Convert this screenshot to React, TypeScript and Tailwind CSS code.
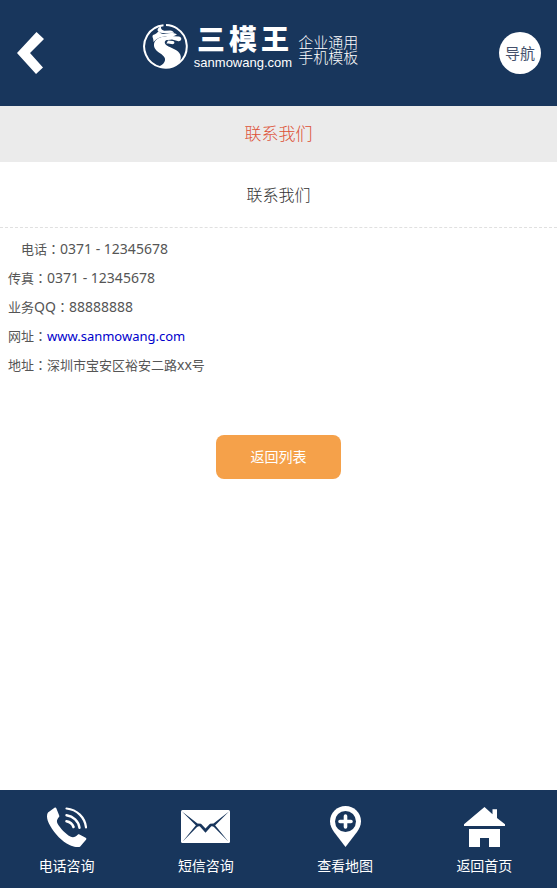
import type { ReactNode } from "react";

const PhoneIcon = () => (
    <svg className="w-10 h-10" viewBox="0 0 40 40" fill="currentColor">
        <path d="M7.500.8 1 5.500C-.8 8-.2 13 3 18.500 8 27 15 34.500 22.500 38c4 2 7.500 2.500 10.500 1.700l6-7c.6-.8.5-1.500-.3-2l-6.200-3.100c-.7-.4-1.300-.3-1.800.2-2 2-4.500 3.200-7.400 1.700C18.500 27 13.500 21.500 10.500 16.500c-1.300-2.500-.3-4.300 1.500-6.500.4-.6.4-1 .1-1.700L9.300 1.200C8.900.3 8.300.2 7.500.8z" />
        <g fill="none" stroke="currentColor" strokeLinecap="round">
            <path strokeWidth="2.200" d="M19.500 1.500C30 2.500 38 10.500 39 20.500" />
            <path strokeWidth="2.400" d="M19.500 8.200c6.800 1 12 6 13 12.500" />
            <path strokeWidth="2.600" d="M19.500 14.200c3.600.7 6 2.700 7 5.800" />
        </g>
    </svg>
);

const MailIcon = () => (
    <svg className="w-[49px] h-[33px]" viewBox="0 0 49 33">
        <rect width="49" height="33" rx="1.500" fill="currentColor" />
        <g fill="#18365c">
            <path d="M1 1.500 16.500 13.500l3.500.3 4.500 4.600 4.500-4.600 3.500-.3L48 1.500 33 16.500l-2.700-.2-5.800 6.400-5.800-6.400-2.700.2z" />
            <path d="M1.500 31.800 15.500 14.500h3zM47.500 31.800 33.500 14.500h-3z" />
        </g>
    </svg>
);

const PinIcon = () => (
    <svg className="w-[31px] h-[41px]" viewBox="0 0 31 41">
        <path fill="currentColor" d="M15.500 0C7 0 0 6.800 0 15.200c0 4.300 1.800 7.400 4 10.800L15.500 41 27 26c2.200-3.400 4-6.500 4-10.800C31 6.800 24 0 15.500 0z" />
        <circle cx="15.500" cy="15.500" r="10.500" fill="#18365c" />
        <path stroke="currentColor" strokeWidth="3.600" strokeLinecap="round" d="M15.500 10v11M10 15.500h11" />
    </svg>
);

const HomeIcon = () => (
    <svg className="w-[41px] h-10" viewBox="0 0 41 40" fill="currentColor">
        <path d="M20.500 0 0 17.200V19h41v-1.700L33 11V2.200h-4.500v5z" />
        <path d="M5 22h31v18H25v-9h-9v9H5z" />
    </svg>
);

const DragonLogo = () => (
    <svg className="w-[45px] h-[46px]" viewBox="3 4 45 46">
        <path
            fill="none"
            stroke="currentColor"
            strokeWidth="2"
            d="M23.500 5.200A21.300 21.300 0 1 0 37 8.500M26 5.100c4 .1 8 1.300 11.500 3.700"
        />
        <g fill="currentColor">
            {/* body */}
            <path d="M26 16.500c-6 0-11.500 3-12 7.500-.4 4 2 6.500 6 9.200 4.500 3 6 5.300 4.500 8.500-1.200 2.500-3.500 4-6 4.800 6 2.300 13 2 18-1.500 5.500-4 5.500-10 1.500-13.500-4-3.500-12-5-13-8-.8-2.500 1-4 4.500-4.300l4.500-.5z" />
            {/* head and jaw */}
            <path d="M27 15l7 1.200 5 .2c1.800.3 2.800 1.800 2.200 3.200-.6 1.500-2 2-3.500 1.500L32 19.500l-7 .8z" />
            <path d="M28 20.500l5 .6c1.700.5 2 2.400.4 3-1.400.5-4-.6-7-.6z" />
            {/* mane and horns */}
            <path d="M13 15c3-1 4.500-2.500 6-4 1 2.500 3.500 3.500 6.500 2.700 4.500-1 8.500-1 11.500.8l-3.500 1.700-8.500.3c-5 .2-8.500 2-11.500 5.500.3-4-2-5-.5-7z" />
            <path d="M17.500 10.500c0-2 1.500-3.300 3.700-4.500-.8 2.500.3 4 3 4.700l6-.2c2 .2 3 1 4 2.200l-6.500.3c-4 .5-8 .3-10.200-2.500z" />
        </g>
    </svg>
);

const links = [
    { label: "电话咨询", icon: <PhoneIcon /> },
    { label: "短信咨询", icon: <MailIcon /> },
    { label: "查看地图", icon: <PinIcon /> },
    { label: "返回首页", icon: <HomeIcon /> },
];

function Row({ label, children }: { label: ReactNode; children: ReactNode }) {
    return (
        <p className="h-[29px] leading-[29px]">
            {label}
            {/* Traditional form centres the colon in its cell */}
            <span lang="zh-TW" className="font-['Noto_Sans_CJK_TC',sans-serif]">：</span>
            {children}
        </p>
    );
}

const Latin = ({ children }: { children: ReactNode }) => (
    <span className="font-['Noto_Sans',sans-serif] text-sm leading-none">{children}</span>
);

export default function App() {
    return (
        <div
            lang="zh-CN"
            className="min-h-screen flex flex-col bg-white text-[#555] font-['Noto_Sans','Noto_Sans_CJK_SC',sans-serif]"
        >
            <header className="flex items-center h-[106px] px-4 bg-[#18365c] text-white">
                <button type="button" aria-label="返回">
                    <svg className="w-7 h-[42px]" viewBox="0 0 28 42" fill="currentColor">
                        <path d="M20.500 0 28 7 14 21l13 14.500-7 6.500L1 21z" />
                    </svg>
                </button>

                {/* Logo */}
                <a href="#" className="flex-1 flex items-center justify-center pr-[42px] pb-3">
                    <DragonLogo />
                    <span className="ml-1.5 flex flex-col items-center">
                        <span className="flex gap-1 text-[28px] leading-[32px] font-black">
                            <span>三</span>
                            <span>模</span>
                            <span>王</span>
                        </span>
                        <span className="font-['Liberation_Sans',sans-serif] text-[13px] leading-[16px]">
                            sanmowang.com
                        </span>
                    </span>
                    <span className="ml-1.5 mt-1.5 text-[15px] leading-[15px] font-light">
                        企业通用
                        <br />
                        手机模板
                    </span>
                </a>

                <button
                    type="button"
                    className="w-[42px] h-[42px] rounded-full bg-white text-[#44506b] text-[15px]"
                >
                    导航
                </button>
            </header>

            <h1 className="h-14 leading-[56px] text-center text-[17px] font-light bg-[#ebebeb] text-[#dd5136]">
                联系我们
            </h1>

            <main className="flex-1">
                <h2 className="h-[66px] leading-[66px] text-center text-base font-light text-[#333] border-b border-dashed border-[#e0e0e0]">
                    联系我们
                </h2>

                <div className="px-2 pt-1.5 text-[13px]">
                    <Row label={<>&#12288;电话</>}>
                        <Latin>0371 - 12345678</Latin>
                    </Row>
                    <Row label="传真">
                        <Latin>0371 - 12345678</Latin>
                    </Row>
                    <Row label={<>业务<Latin>QQ</Latin></>}>
                        <Latin>88888888</Latin>
                    </Row>
                    <Row label="网址">
                        <a href="#" className="text-[#0000cc]">
                            www.sanmowang.com
                        </a>
                    </Row>
                    <Row label="地址">
                        深圳市宝安区裕安二路<Latin>xx</Latin>号
                    </Row>
                </div>

                <div className="mt-14 text-center">
                    <button
                        type="button"
                        className="w-[125px] h-11 rounded-lg bg-[#f5a14a] text-white text-sm"
                    >
                        返回列表
                    </button>
                </div>
            </main>

            <footer className="grid grid-cols-4 h-[98px] pt-4 bg-[#18365c] text-white">
                {links.map((link) => (
                    <a key={link.label} href="#" className="flex flex-col items-center pr-1.5 text-sm">
                        <span className="flex items-center h-[41px]">{link.icon}</span>
                        <span className="mt-[9px]">{link.label}</span>
                    </a>
                ))}
            </footer>
        </div>
    );
}
